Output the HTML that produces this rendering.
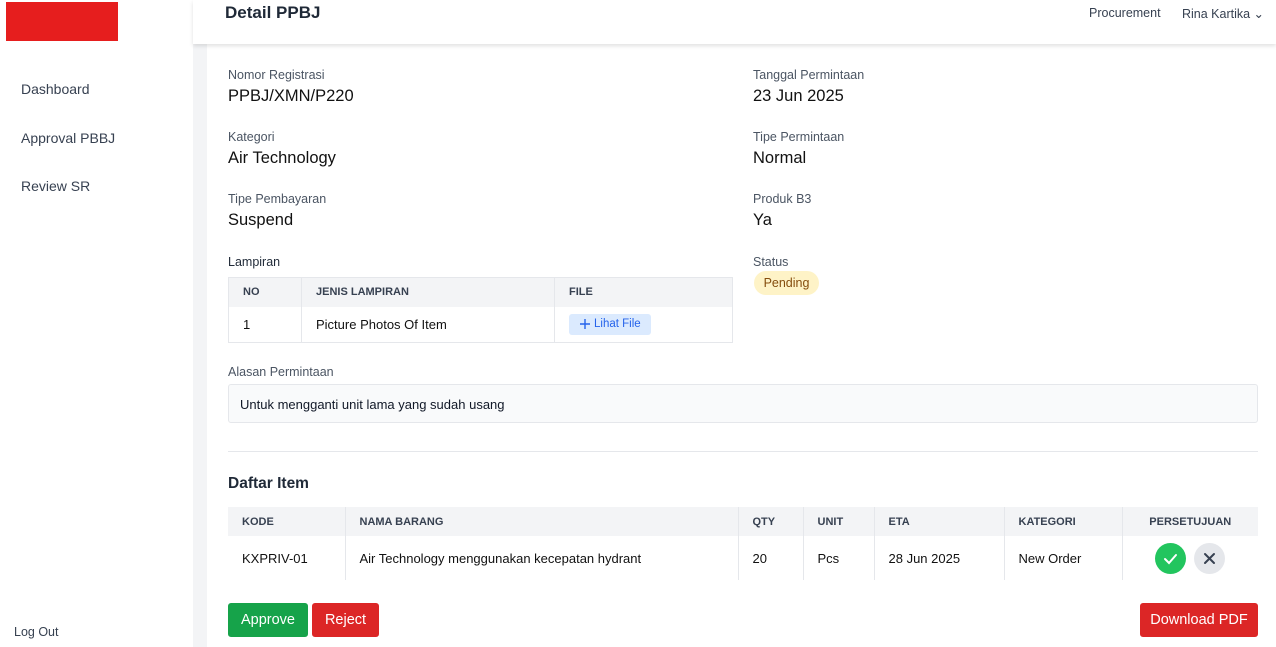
<!DOCTYPE html>
<html><head><style>
*{box-sizing:border-box;margin:0;padding:0}
body{width:1276px;height:647px;overflow:hidden;background:#fff;font-family:"Liberation Sans",sans-serif;color:#111827;position:relative}
.a{position:absolute}
.lbl{font-size:12.5px;color:#4b5563}
.val{font-size:16.5px;color:#111}
.nav{font-size:14px;color:#374151;left:21px}
table{border-collapse:collapse;position:absolute;font-size:13px}
th{background:#f3f4f6;font-size:11px;font-weight:bold;color:#374151;text-align:left;padding:0 14px;height:29px;border:1px solid #e5e7eb;border-top:none;border-bottom:none}
td{padding:0 14px;border:1px solid #e5e7eb;border-top:none;color:#111}
th:first-child,td:first-child{border-left:none}
th:last-child,td:last-child{border-right:none}
.items td{border-bottom:none}
.btn{position:absolute;color:#fff;font-size:14.5px;border-radius:3px;display:flex;align-items:center;justify-content:center;top:603px;height:34px}
</style></head><body>
<div class="a" style="left:6px;top:2px;width:112px;height:39px;background:#e61e1e"></div>
<div class="a" style="left:193px;top:44px;width:14px;height:603px;background:#f3f4f6"></div>
<div class="a" style="left:193px;top:0;width:1083px;height:44px;background:#fff;box-shadow:0 2px 4px rgba(0,0,0,.12)"></div>
<div class="a" style="left:225px;top:3px;font-size:17px;font-weight:bold;color:#1f2937">Detail PPBJ</div>
<div class="a" style="left:1089px;top:6px;font-size:12.5px;color:#374151">Procurement</div>
<div class="a" style="left:1182px;top:6px;font-size:12.5px;color:#374151">Rina Kartika &#8964;</div>
<div class="a nav" style="top:81px">Dashboard</div>
<div class="a nav" style="top:130px">Approval PBBJ</div>
<div class="a nav" style="top:178px">Review SR</div>
<div class="a" style="left:14px;top:625px;font-size:12.5px;color:#374151">Log Out</div>

<div class="a lbl" style="left:228px;top:68px">Nomor Registrasi</div>
<div class="a val" style="left:228px;top:87px">PPBJ/XMN/P220</div>
<div class="a lbl" style="left:228px;top:130px">Kategori</div>
<div class="a val" style="left:228px;top:149px">Air Technology</div>
<div class="a lbl" style="left:228px;top:192px">Tipe Pembayaran</div>
<div class="a val" style="left:228px;top:211px">Suspend</div>
<div class="a lbl" style="left:753px;top:68px">Tanggal Permintaan</div>
<div class="a val" style="left:753px;top:87px">23 Jun 2025</div>
<div class="a lbl" style="left:753px;top:130px">Tipe Permintaan</div>
<div class="a val" style="left:753px;top:149px">Normal</div>
<div class="a lbl" style="left:753px;top:192px">Produk B3</div>
<div class="a val" style="left:753px;top:211px">Ya</div>
<div class="a lbl" style="left:753px;top:255px">Status</div>
<div class="a" style="left:754px;top:271px;width:65px;height:24px;border-radius:12px;background:#fef3c7;color:#854d0e;font-size:12.5px;text-align:center;line-height:24px">Pending</div>

<div class="a lbl" style="left:228px;top:255px;color:#1f2937">Lampiran</div>
<table style="left:228px;top:277px;width:505px;border:1px solid #e5e7eb">
<tr><th style="width:73px">NO</th><th style="width:253px">JENIS LAMPIRAN</th><th>FILE</th></tr>
<tr style="height:36px"><td>1</td><td>Picture Photos Of Item</td><td><span style="display:inline-flex;align-items:center;gap:3px;background:#dbeafe;color:#2563eb;font-size:11.5px;padding:0 10px;height:21px;border-radius:3px"><svg width="12" height="12" viewBox="0 0 12 12"><path d="M6 1v10M1 6h10" stroke="#2563eb" stroke-width="1.4"/></svg> Lihat File</span></td></tr>
</table>

<div class="a lbl" style="left:228px;top:365px">Alasan Permintaan</div>
<div class="a" style="left:228px;top:384px;width:1030px;height:39px;background:#f9fafb;border:1px solid #e5e7eb;border-radius:3px;font-size:13px;padding:12px 11px">Untuk mengganti unit lama yang sudah usang</div>
<div class="a" style="left:228px;top:451px;width:1030px;height:1px;background:#e5e7eb"></div>
<div class="a" style="left:228px;top:475px;font-size:15.5px;font-weight:bold;color:#1f2937">Daftar Item</div>

<table class="items" style="left:228px;top:507px;width:1030px">
<tr><th style="width:117px">KODE</th><th style="width:393px">NAMA BARANG</th><th style="width:65px">QTY</th><th style="width:71px">UNIT</th><th style="width:130px">ETA</th><th style="width:118px">KATEGORI</th><th style="text-align:center">PERSETUJUAN</th></tr>
<tr style="height:44px"><td>KXPRIV-01</td><td>Air Technology menggunakan kecepatan hydrant</td><td>20</td><td>Pcs</td><td>28 Jun 2025</td><td>New Order</td><td style="text-align:center">
<span style="display:inline-block;width:31px;height:31px;border-radius:50%;background:#22c55e;vertical-align:middle"><svg width="31" height="31" viewBox="0 0 31 31"><path d="M10 16l4 4 7-8" stroke="#fff" stroke-width="2" fill="none" stroke-linecap="round"/></svg></span>
<span style="display:inline-block;width:31px;height:31px;border-radius:50%;background:#e5e7eb;vertical-align:middle;margin-left:4px"><svg width="31" height="31" viewBox="0 0 31 31"><path d="M11 11l9 9M20 11l-9 9" stroke="#374151" stroke-width="2" stroke-linecap="round"/></svg></span></td></tr>
</table>

<div class="btn" style="left:228px;width:80px;background:#16a34a">Approve</div>
<div class="btn" style="left:312px;width:67px;background:#dc2626">Reject</div>
<div class="btn" style="left:1140px;width:118px;background:#dc2626">Download PDF</div>
</body></html>
